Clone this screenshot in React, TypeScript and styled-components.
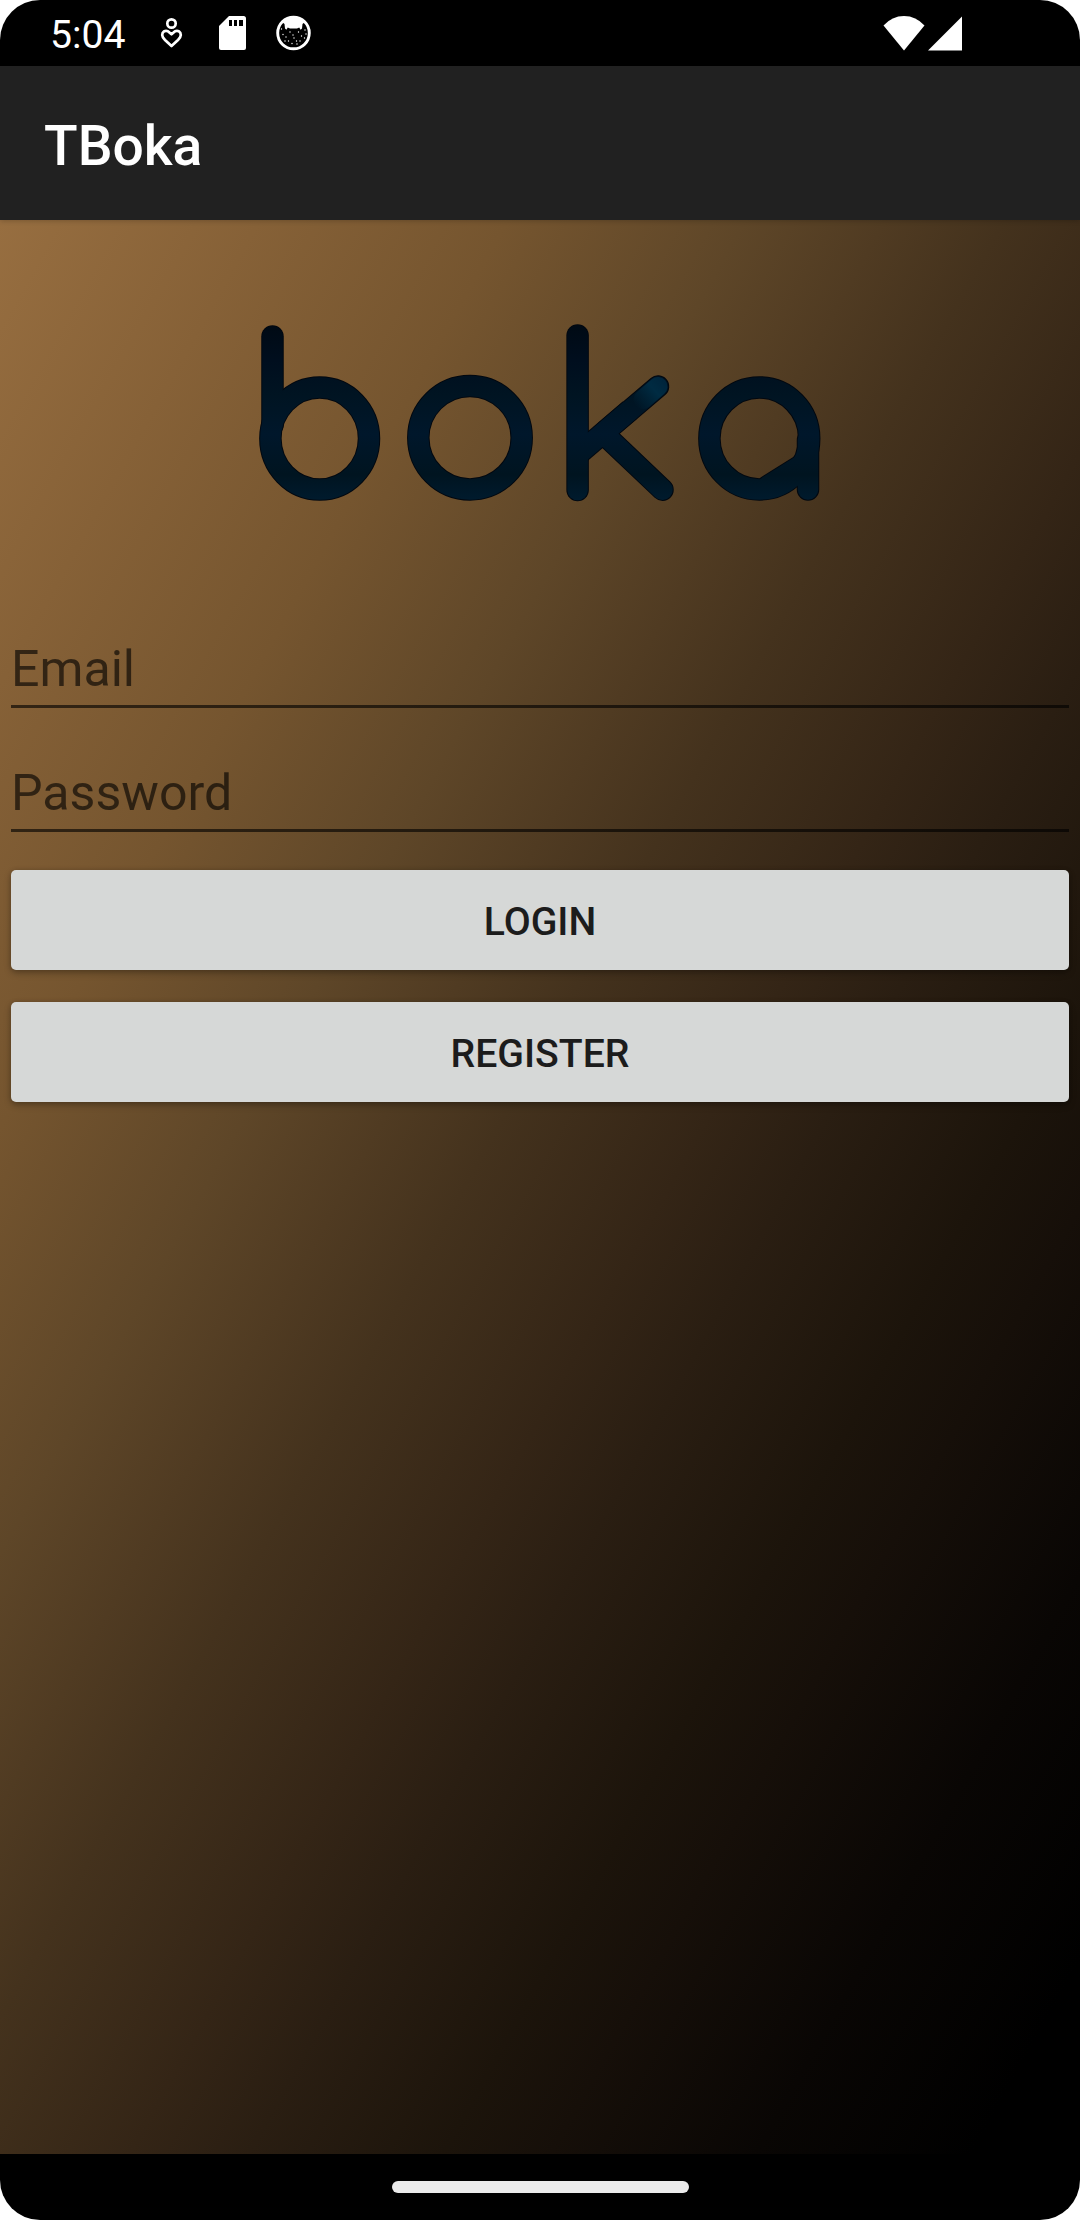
import React from "react";
import styled, { createGlobalStyle } from "styled-components";

const GlobalStyle = createGlobalStyle`
  * { box-sizing: border-box; }
  html, body { margin: 0; padding: 0; background: #fff; }
`;

const Screen = styled.div`
  width: 1080px;
  height: 2220px;
  display: flex;
  flex-direction: column;
  overflow: hidden;
  border-radius: 40px;
  background: #000;
  font-family: Roboto, "Liberation Sans", sans-serif;
`;

const StatusBar = styled.header`
  flex: none;
  height: 66px;
  display: flex;
  align-items: center;
  justify-content: space-between;
  padding: 0 118px 0 50px;
  color: #fff;
`;

const StatusGroup = styled.div<{ $gap: number }>`
  display: flex;
  align-items: center;
  gap: ${(p) => p.$gap}px;
`;

const Clock = styled.span`
  width: 80px;
  font-size: 39.2px;
  line-height: 46px;
  padding-top: 3px;
  white-space: nowrap;
`;

const Icon = styled.svg`
  display: block;
  flex: none;
`;

const TitleBar = styled.div`
  flex: none;
  height: 154px;
  display: flex;
  align-items: center;
  padding: 6px 44px 0;
  background: #212121;
  z-index: 1;
  box-shadow: 0 1px 5px rgba(0, 0, 0, 0.2);
`;

const Title = styled.h1`
  margin: 0;
  color: #fff;
  font-size: 55.2px;
  line-height: 64px;
  font-weight: 500;
`;

const Content = styled.main`
  flex: 1;
  display: flex;
  flex-direction: column;
  background: linear-gradient(
    to bottom right,
    #976e40 0%,
    #866137 12%,
    #75552f 23.5%,
    #5e4628 34.5%,
    #503b22 41%,
    #44321d 46.5%,
    #342516 56%,
    #2a1e12 61.5%,
    #1c140b 70.5%,
    #160f09 75.5%,
    #090604 85%,
    #000000 95%,
    #000000 100%
  );
`;

const LogoArea = styled.div`
  height: 385px;
  display: flex;
  justify-content: center;
  padding-top: 80px;
`;

const Form = styled.form`
  display: flex;
  flex-direction: column;
  padding: 0 11px;
`;

const Field = styled.input`
  appearance: none;
  height: 103px;
  margin: 0 0 21px;
  padding: 27px 0 0;
  border: 0;
  border-bottom: 3px solid rgba(0, 0, 0, 0.62);
  border-radius: 0;
  outline: 0;
  background: transparent;
  color: #1c1c1c;
  font: 400 50.1px/58px Roboto, "Liberation Sans", sans-serif;
  &::placeholder {
    color: rgba(0, 0, 0, 0.62);
    opacity: 1;
  }
`;

const Actions = styled.div`
  display: flex;
  flex-direction: column;
  gap: 32px;
  padding-top: 17px;
`;

const Button = styled.button`
  height: 100px;
  padding: 4px 0 0;
  border: 0;
  border-radius: 5px;
  background: #d6d8d7;
  color: #1c1c1c;
  font: 500 39.2px/45px Roboto, "Liberation Sans", sans-serif;
  box-shadow: 0 3px 7px rgba(0, 0, 0, 0.28), 0 0 4px rgba(0, 0, 0, 0.12);
`;

const NavBar = styled.footer`
  flex: none;
  height: 66px;
  display: flex;
  align-items: center;
  justify-content: center;
`;

const HomeHandle = styled.div`
  width: 297px;
  height: 12px;
  border-radius: 6px;
  background: #ebebeb;
`;

const CareIcon = () => (
  <Icon width="29" height="34" viewBox="0 0 29 34" fill="none" stroke="#fff" strokeWidth="2.7">
    <circle cx="11.5" cy="7.5" r="4.2" />
    <path
      d="M11.5 18.3 L8.2 15.4 C5 13.6 2.2 16.2 2.2 19 C2.2 21 3.5 22.5 5 24 L11.5 30 L18 24 C19.5 22.5 20.8 21 20.8 19 C20.8 16.2 18 13.6 14.8 15.4 Z"
      strokeLinejoin="round"
    />
  </Icon>
);

const SdCardIcon = () => (
  <Icon width="27" height="34" viewBox="0 0 27 34">
    <path d="M10 0 H24.5 Q27 0 27 2.5 V32 Q27 34 25 34 H2 Q0 34 0 32 V10 Z" fill="#fff" />
    <path d="M10 4h3v6h-3z M15 4h3v6h-3z M20 4h4v6h-4z" fill="#000" />
  </Icon>
);

const CatIcon = () => (
  <Icon width="36" height="36" viewBox="0 0 36 36">
    <circle cx="17.5" cy="18" r="15.8" fill="#000" stroke="#fff" strokeWidth="2.9" />
    <path
      d="M6 7 Q17.5 -2 29 7 L26.5 9 L26 13.5 L24.6 14.8 L23.2 12.6 L21 13.4 H14 L11.8 12.6 L10.4 14.8 L9 13.5 L8.5 9 Z"
      fill="#fff"
    />
    <g fill="#fff">
      {[
        [5.5, 14], [7, 19.5], [10, 22], [14, 17], [22.5, 17], [25.5, 21],
        [12.5, 26], [18, 23], [16, 28.5], [21, 29], [24, 26], [29, 15],
        [28.5, 23], [20.5, 26], [9, 26], [17, 20], [30, 19],
      ].map(([x, y]) => (
        <circle key={`${x}-${y}`} cx={x} cy={y} r="0.7" />
      ))}
    </g>
  </Icon>
);

const WifiIcon = () => (
  <Icon width="42" height="35" viewBox="0 0 42 35">
    <path d="M0.5 9.5 Q9 0 21 0 Q33 0 41.5 9.5 L21 34.5 Z" fill="#fff" />
  </Icon>
);

const SignalIcon = () => (
  <Icon width="34" height="35" viewBox="0 0 34 35">
    <path d="M34 0.5 V34.5 H0 Z" fill="#fff" />
  </Icon>
);

/* Rings and round-ended bars of the boka mark; coordinates are in screen units. */
const MarkShapes = () => (
  <>
    <line x1="272.5" y1="336.5" x2="272.5" y2="425" />
    <ellipse cx="319.7" cy="438.6" rx="49.3" ry="51" />
    <circle cx="470" cy="437.7" r="51.7" />
    <line x1="577.6" y1="335.5" x2="577.6" y2="490" />
    <line x1="575" y1="457" x2="630" y2="410" strokeLinecap="butt" />
    <line x1="606" y1="430.8" x2="658" y2="386.5" />
    <line x1="606" y1="436" x2="662.5" y2="489.7" />
    <ellipse cx="759.3" cy="438.4" rx="49.9" ry="51" />
    <line x1="808" y1="440" x2="808" y2="489.5" />
    <line x1="800" y1="466" x2="768" y2="486" />
  </>
);

const BokaLogo = () => (
  <Icon width="600" height="220" viewBox="240 300 600 220" fill="none" strokeLinecap="round" role="img" aria-label="boka">
    <defs>
      <linearGradient id="ink" gradientUnits="userSpaceOnUse" x1="0" y1="325" x2="0" y2="501">
        <stop offset="0" stopColor="#000a14" />
        <stop offset="0.2" stopColor="#000e1e" />
        <stop offset="0.4" stopColor="#001422" />
        <stop offset="0.62" stopColor="#00172b" />
        <stop offset="0.85" stopColor="#001420" />
        <stop offset="1" stopColor="#001b2e" />
      </linearGradient>
      <linearGradient id="tip" gradientUnits="userSpaceOnUse" x1="636" y1="406" x2="666" y2="379">
        <stop offset="0" stopColor="#002b42" stopOpacity="0" />
        <stop offset="0.6" stopColor="#002b42" />
        <stop offset="1" stopColor="#00233a" />
      </linearGradient>
    </defs>
    <g stroke="#01070f" strokeWidth="22.5">
      <MarkShapes />
    </g>
    <g stroke="url(#ink)" strokeWidth="20.5">
      <MarkShapes />
    </g>
    <line x1="643" y1="399.5" x2="658" y2="386.5" stroke="url(#tip)" strokeWidth="19" />
  </Icon>
);

export default function App() {
  return (
    <>
      <GlobalStyle />
      <Screen>
        <StatusBar>
          <StatusGroup $gap={30}>
            <Clock>5:04</Clock>
            <CareIcon />
            <SdCardIcon />
            <CatIcon />
          </StatusGroup>
          <StatusGroup $gap={3}>
            <WifiIcon />
            <SignalIcon />
          </StatusGroup>
        </StatusBar>
        <TitleBar>
          <Title>TBoka</Title>
        </TitleBar>
        <Content>
          <LogoArea>
            <BokaLogo />
          </LogoArea>
          <Form onSubmit={(e) => e.preventDefault()}>
            <Field type="email" placeholder="Email" aria-label="Email" />
            <Field type="password" placeholder="Password" aria-label="Password" />
            <Actions>
              <Button type="submit">LOGIN</Button>
              <Button type="button">REGISTER</Button>
            </Actions>
          </Form>
        </Content>
        <NavBar>
          <HomeHandle />
        </NavBar>
      </Screen>
    </>
  );
}
